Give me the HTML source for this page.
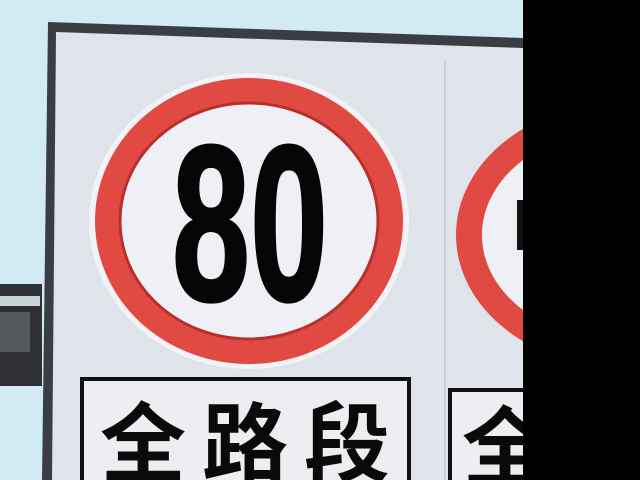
<!DOCTYPE html>
<html><head><meta charset="utf-8"><style>html,body{margin:0;padding:0;background:#000;width:640px;height:480px;overflow:hidden;}svg{display:block}</style></head>
<body>
<svg width="640" height="480" viewBox="0 0 640 480" xmlns="http://www.w3.org/2000/svg">
<rect x="0" y="0" width="523" height="480" fill="#d2eaf4"/>
<rect x="0" y="284" width="42" height="102" fill="#2e3033"/>
<rect x="0" y="296" width="40" height="10" fill="#c9d3d8"/>
<rect x="0" y="312" width="30" height="40" fill="#55595c"/>
<polygon points="48,22 523,38 523,480 42,480" fill="#3a3d44"/>
<polygon points="56,32 523,48 523,480 52,480" fill="#dfe3ea"/>
<line x1="445" y1="60" x2="445" y2="480" stroke="#c9ced8" stroke-width="2"/>
<ellipse cx="249" cy="221" rx="160" ry="148" fill="#f3f3f7"/>
<ellipse cx="249" cy="221" rx="141" ry="130" fill="none" stroke="#e04a42" stroke-width="26"/>
<ellipse cx="249" cy="221" rx="129" ry="118" fill="none" stroke="#b8302c" stroke-width="3"/>
<ellipse cx="249" cy="221" rx="127" ry="116" fill="#eef0f6"/>
<text x="250" y="300" text-anchor="middle" font-family="Liberation Sans, sans-serif" font-weight="bold" font-size="222" textLength="156" lengthAdjust="spacingAndGlyphs" fill="#050505" stroke="#050505" stroke-width="3">80</text>
<ellipse cx="625" cy="235" rx="156" ry="120" fill="none" stroke="#e04a42" stroke-width="26"/>
<ellipse cx="625" cy="235" rx="143" ry="107" fill="#eef0f6"/>
<rect x="517" y="200" width="6" height="50" fill="#111"/>
<rect x="82" y="379" width="327" height="101" fill="#eceef2"/>
<path d="M82 480 V379 H409 V480" fill="none" stroke="#111" stroke-width="4"/>
<text x="245" y="474" text-anchor="middle" font-family="Noto Sans CJK SC, sans-serif" font-weight="bold" font-size="86" textLength="290" lengthAdjust="spacing" fill="#0a0a0a">全路段</text>
<rect x="450" y="390" width="73" height="90" fill="#eceef2"/>
<path d="M450 480 V390 H523" fill="none" stroke="#111" stroke-width="4"/>
<text x="462" y="478" font-family="Noto Sans CJK SC, sans-serif" font-weight="bold" font-size="86" fill="#0a0a0a">全</text>
<rect x="523" y="0" width="117" height="480" fill="#000"/>
</svg>
</body></html>
